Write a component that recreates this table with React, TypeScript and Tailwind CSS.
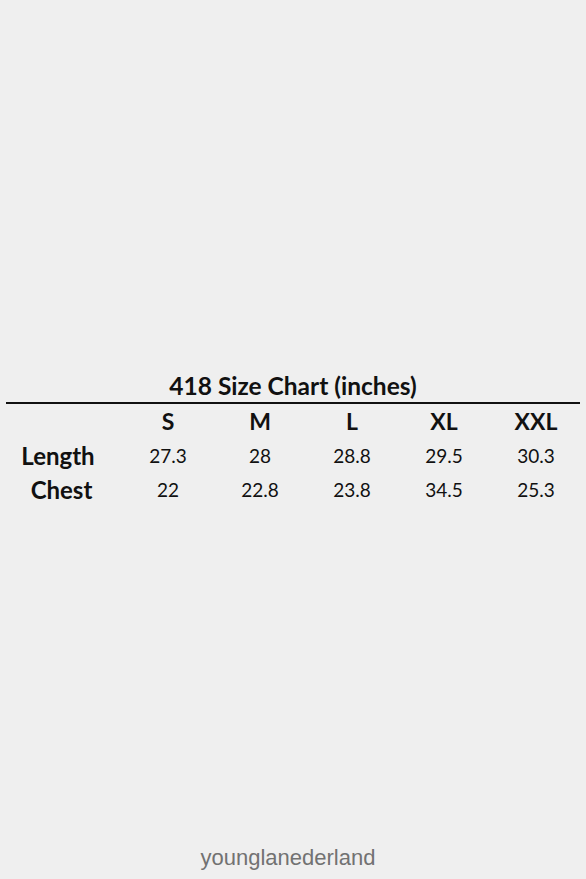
import React from 'react';

const sizes = ['S', 'M', 'L', 'XL', 'XXL'];
const rows = [
  { label: 'Length', pad: 'pr-[12px]', values: ['27.3', '28', '28.8', '29.5', '30.3'] },
  { label: 'Chest', pad: 'pr-[5px]', values: ['22', '22.8', '23.8', '34.5', '25.3'] },
];

export default function App() {
  return (
    <div className="h-[879px] w-[586px] bg-[#efefef] flex flex-col text-[#111] font-['Lato','Liberation_Sans',sans-serif]">
      <div className="pt-[371px]">
        <h1 className="text-center text-[24.5px] font-bold leading-[30px]">418 Size Chart (inches)</h1>
        <div className="mx-[6px] mt-[1px] h-[2px] bg-[#111]" />
        <div className="grid grid-cols-[116px_repeat(5,92px)] ml-[6px] -mt-[1px]">
          <div />
          {sizes.map(s => (
            <div key={s} className="text-center text-[23px] font-bold leading-[36px]">{s}</div>
          ))}
          {rows.map(r => (
            <React.Fragment key={r.label}>
              <div className={`text-center ${r.pad} text-[24px] font-bold leading-[34px]`}>{r.label}</div>
              {r.values.map((v, i) => (
                <div key={i} className="text-center text-[19px] leading-[34px]">{v}</div>
              ))}
            </React.Fragment>
          ))}
        </div>
      </div>
      <div className="mt-auto pb-[5px] pr-[10px] text-center text-[22px] text-[#727272] font-['Liberation_Sans',Arial,sans-serif]">
        younglanederland
      </div>
    </div>
  );
}
